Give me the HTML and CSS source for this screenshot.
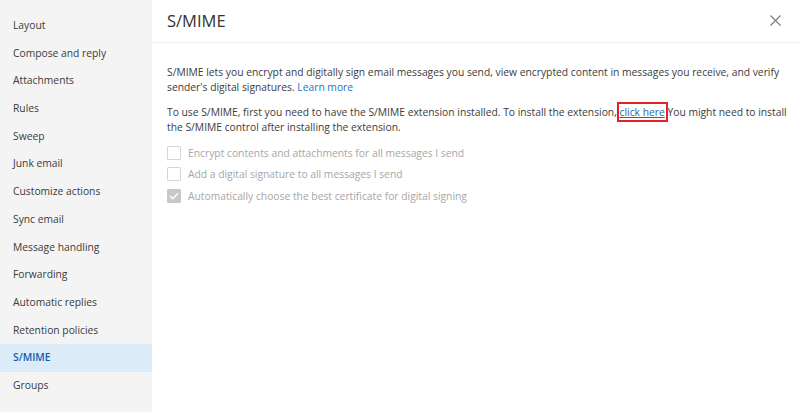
FILE: index.html
```html
<!DOCTYPE html>
<html lang="en">
<head>
<meta charset="utf-8">
<title>S/MIME</title>
<link rel="stylesheet" href="styles.css">
</head>
<body>
<div class="app">
  <nav class="sidebar">
    <div class="nav-item">Layout</div>
    <div class="nav-item">Compose and reply</div>
    <div class="nav-item">Attachments</div>
    <div class="nav-item">Rules</div>
    <div class="nav-item">Sweep</div>
    <div class="nav-item">Junk email</div>
    <div class="nav-item">Customize actions</div>
    <div class="nav-item">Sync email</div>
    <div class="nav-item">Message handling</div>
    <div class="nav-item">Forwarding</div>
    <div class="nav-item">Automatic replies</div>
    <div class="nav-item">Retention policies</div>
    <div class="nav-item selected">S/MIME</div>
    <div class="nav-item">Groups</div>
  </nav>
  <main class="panel">
    <header class="panel-header">
      <h1 class="title">S/MIME</h1>
      <button class="close" aria-label="Close">
        <svg width="11" height="11" viewBox="0 0 11 11"><path d="M0.5 0.5 L10.5 10.5 M10.5 0.5 L0.5 10.5" stroke="#7a7a7a" stroke-width="1.1" fill="none"/></svg>
      </button>
    </header>
    <section class="content">
      <p class="para">S/MIME lets you encrypt and digitally sign email messages you send, view encrypted content in messages you receive, and verify sender's digital signatures. <a class="link" href="#">Learn more</a></p>
      <p class="para">To use S/MIME, first you need to have the S/MIME extension installed. To install the extension, <a class="boxed-link" href="#">click here</a> You might need to install the S/MIME control after installing the extension.</p>
      <div class="options">
        <label class="option"><span class="box"></span><span>Encrypt contents and attachments for all messages I send</span></label>
        <label class="option"><span class="box"></span><span>Add a digital signature to all messages I send</span></label>
        <label class="option"><span class="box checked"><svg width="10" height="8" viewBox="0 0 10 8"><path d="M1 4 L3.7 6.7 L9 1.2" stroke="#fff" stroke-width="1.3" fill="none"/></svg></span><span>Automatically choose the best certificate for digital signing</span></label>
      </div>
    </section>
  </main>
</div>
</body>
</html>
```
FILE: styles.css
```css
html, body {
  margin: 0;
  padding: 0;
  height: 100%;
}
body {
  font-family: "Open Sans", "Noto Sans", sans-serif;
  color: #333;
  background: #fff;
}
.app {
  display: flex;
  height: 412px;
  width: 800px;
  overflow: hidden;
}
.sidebar {
  width: 152px;
  flex: none;
  background: #f4f4f4;
  padding-top: 12px;
  box-sizing: border-box;
}
.nav-item {
  height: 27.7px;
  line-height: 27.7px;
  padding-left: 13px;
  font-size: 10.3px;
  color: #3b3b3b;
  white-space: nowrap;
}
.nav-item.selected {
  background: #dcebf8;
  color: #1160ab;
  font-weight: 600;
}
.panel {
  flex: 1;
  display: flex;
  flex-direction: column;
}
.panel-header {
  height: 43px;
  box-sizing: border-box;
  border-bottom: 1px solid #f0f0f0;
  display: flex;
  align-items: center;
  justify-content: space-between;
  padding: 0 19px 2px 15px;
}
.title {
  margin: 0;
  font-size: 16.5px;
  font-weight: 400;
  color: #333;
}
.close {
  border: 0;
  background: none;
  padding: 0;
  display: flex;
}
.content {
  padding: 22px 10px 0 15px;
}
.para {
  margin: 0 0 10px 0;
  font-size: 10.3px;
  line-height: 15px;
  color: #3b3b3b;
}
.link {
  color: #1b74c5;
  text-decoration: none;
}
.boxed-link {
  color: #2a63a8;
  text-decoration: underline;
  outline: 2px solid #e0242a;
  outline-offset: 1px;
}
.options {
  display: flex;
  flex-direction: column;
  gap: 6px;
}
.option {
  display: flex;
  align-items: center;
  gap: 7px;
  font-size: 10.3px;
  color: #a6a6a6;
  height: 15.5px;
}
.box {
  width: 14px;
  height: 14px;
  border: 1px solid #d6d6d6;
  box-sizing: border-box;
  border-radius: 1px;
  display: flex;
  align-items: center;
  justify-content: center;
}
.box.checked {
  background: #c8c8c8;
  border-color: #c8c8c8;
}
```
